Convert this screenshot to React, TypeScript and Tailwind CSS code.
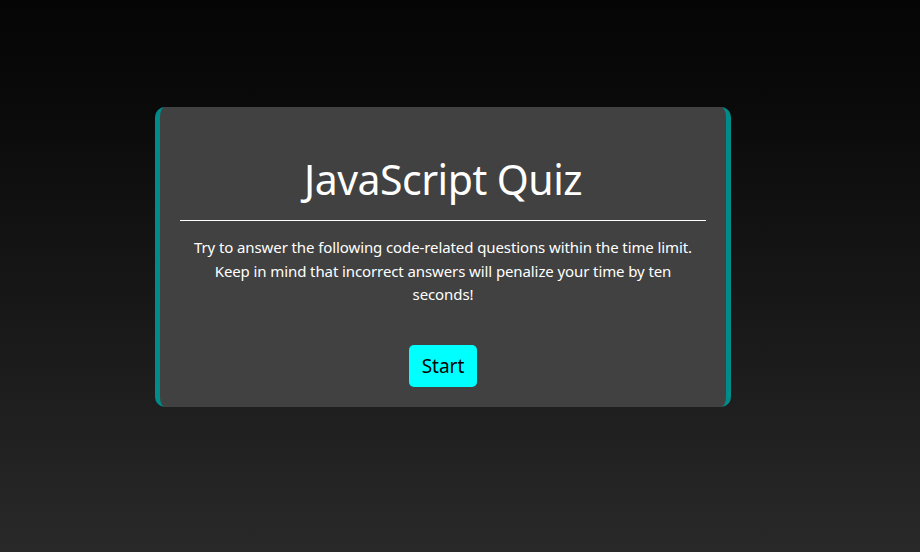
import React from "react";

export default function App() {
  return (
    <div className="min-h-[552px] w-full bg-gradient-to-b from-[#050505] to-[#292929] pt-[107px] pl-[155px] font-['Noto_Sans',sans-serif]">
      {/* Quiz card */}
      <div className="flex h-[300px] w-[576px] flex-col items-center rounded-[10px] border-x-[5px] border-[#008b8b] bg-[#414141] px-[20px] pb-[20px] text-white">
        <h1 className="mt-[48px] text-[41px] leading-[48px] tracking-[-0.5px]">JavaScript Quiz</h1>
        <hr className="mt-[17px] w-full border-t border-white" />
        <p className="mt-[15px] w-[510px] text-center text-[15px] leading-[23.5px] tracking-[-0.1px]">
          Try to answer the following code-related questions within the time limit. Keep in mind that incorrect answers will penalize your time by ten seconds!
        </p>
        <button className="mt-auto h-[42px] w-[68px] rounded-[5px] bg-[#00ffff] text-[19px] text-black">
          Start
        </button>
      </div>
    </div>
  );
}
